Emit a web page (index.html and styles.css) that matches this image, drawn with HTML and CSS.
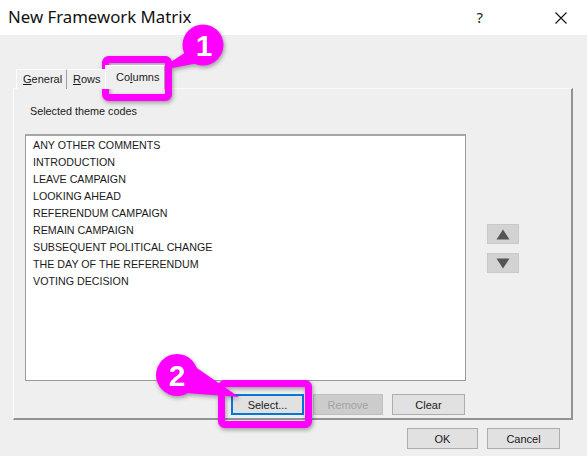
FILE: index.html
```html
<!DOCTYPE html>
<html>
<head>
<meta charset="utf-8">
<link rel="stylesheet" href="styles.css">
</head>
<body>
<div class="window">
  <div class="titlebar">
    <div class="title">New Framework Matrix</div>
    <div class="title-actions">
      <span class="help">?</span>
      <svg class="close" width="12" height="12" viewBox="0 0 12 12"><path d="M0.5 0.5 L11.5 11.5 M11.5 0.5 L0.5 11.5" stroke="#111" stroke-width="1.1" fill="none"/></svg>
    </div>
  </div>
  <div class="dialog">
    <div class="tabs">
      <div class="tab"><u>G</u>eneral</div>
      <div class="tab tab-rows"><u>R</u>ows</div>
      <div class="tab active">Co<u>l</u>umns</div>
    </div>
    <div class="panel">
      <div class="label">Selected theme codes</div>
      <div class="list-row">
        <div class="listcol">
          <ul class="list">
            <li>ANY OTHER COMMENTS</li>
            <li>INTRODUCTION</li>
            <li>LEAVE CAMPAIGN</li>
            <li>LOOKING AHEAD</li>
            <li>REFERENDUM CAMPAIGN</li>
            <li>REMAIN CAMPAIGN</li>
            <li>SUBSEQUENT POLITICAL CHANGE</li>
            <li>THE DAY OF THE REFERENDUM</li>
            <li>VOTING DECISION</li>
          </ul>
          <div class="list-buttons">
            <button class="btn focus btn-select">Select...</button>
            <button class="btn disabled btn-remove">Remove</button>
            <button class="btn btn-clear">Clear</button>
          </div>
        </div>
        <div class="movers">
          <div class="mover"><svg width="14" height="11" viewBox="0 0 14 11"><path d="M7 0.5 L13.5 10.5 L0.5 10.5 Z" fill="#555"/></svg></div>
          <div class="mover"><svg width="14" height="11" viewBox="0 0 14 11"><path d="M0.5 0.5 L13.5 0.5 L7 10.5 Z" fill="#555"/></svg></div>
        </div>
      </div>
    </div>
    <div class="footer">
      <button class="btn btn-ok">OK</button>
      <button class="btn btn-cancel">Cancel</button>
    </div>
  </div>
  <svg class="annotations" width="587" height="456" viewBox="0 0 587 456">
    <g class="mark">
      <rect x="105.5" y="59.5" width="63" height="38" rx="3" fill="none" stroke="#ff00ff" stroke-width="7"/>
      <circle cx="203" cy="45" r="20.5" fill="#ff00ff"/>
      <path d="M186 52 L157 71 L198 63 Z" fill="#ff00ff"/>
      <text x="204" y="56" class="badge-num">1</text>
    </g>
    <g class="mark">
      <rect x="221.5" y="383.5" width="87" height="41" rx="3" fill="none" stroke="#ff00ff" stroke-width="7"/>
      <circle cx="177" cy="375" r="21" fill="#ff00ff"/>
      <path d="M191 364 L239 397 L186 393 Z" fill="#ff00ff"/>
      <text x="177" y="386" class="badge-num">2</text>
    </g>
  </svg>
</div>
</body>
</html>
```
FILE: styles.css
```css
* { box-sizing: border-box; }
html, body { margin: 0; padding: 0; }
body {
  width: 587px;
  height: 456px;
  overflow: hidden;
  background: #f0f0f0;
  font-family: "Liberation Sans", Arial, sans-serif;
  color: #111;
}
.window {
  position: relative;
  width: 587px;
  height: 456px;
  background: #f0eff0;
}
.titlebar {
  height: 35px;
  background: #ffffff;
  display: flex;
  align-items: center;
  justify-content: space-between;
  padding: 0 20px 0 8px;
}
.title {
  font-family: "Noto Sans", "Open Sans", sans-serif;
  font-size: 16.8px;
  color: #111;
  margin-top: -2px;
}
.title-actions {
  display: flex;
  align-items: center;
  gap: 72px;
}
.help {
  font-family: "Noto Sans", sans-serif;
  font-size: 15px;
  color: #222;
  margin-top: -2px;
}
.close { display: block; }

.dialog {
  padding: 31px 0 0 13px;
}
.tabs {
  display: flex;
  align-items: flex-end;
  height: 23px;
  padding-left: 3px;
  position: relative;
  z-index: 1;
  margin-bottom: -1px;
}
.tab {
  height: 20px;
  font-size: 11px;
  line-height: 19px;
  padding: 0 6px;
  border-top: 1px solid #fdfdfd;
  border-left: 1px solid #fdfdfd;
  border-right: 1px solid #a0a0a0;
  background: #f0eff0;
  color: #1a1a1a;
  width: 51px;
}
.tab-rows {
  width: 38px;
  border-left: none;
  border-right: none;
}
.tab.active {
  height: 24px;
  width: 60px;
  padding-left: 10px;
  line-height: 22px;
  border-right: 1px solid #a0a0a0;
  border-left: 1px solid #fdfdfd;
}
.tab u { text-decoration-thickness: 1px; text-underline-offset: 1px; }

.panel {
  width: 560px;
  height: 332px;
  border-top: 1px solid #fbfbfb;
  border-left: 1px solid #fdfdfd;
  border-right: 2px solid #939393;
  border-bottom: 2px solid #939393;
  padding: 16px 0 0 11px;
}
.label {
  font-size: 10.8px;
  margin-left: 5px;
  height: 29px;
  color: #1a1a1a;
}
.list-row {
  display: flex;
  align-items: flex-start;
}
.listcol {
  width: 441px;
}
.list {
  list-style: none;
  margin: 0;
  width: 441px;
  height: 247px;
  background: #ffffff;
  border: 1px solid #9a9a9a;
  border-top: 2px solid #a6a6a6;
  padding: 1px 0 0 7px;
}
.list li {
  font-size: 10.7px;
  line-height: 17px;
  height: 17px;
  color: #1a1a1a;
}
.list-buttons {
  display: flex;
  justify-content: flex-end;
  gap: 9px;
  margin-top: 13px;
  padding-right: 1px;
}
.movers {
  margin: 90px 0 0 21px;
  display: flex;
  flex-direction: column;
  gap: 9px;
}
.mover {
  width: 32px;
  height: 20px;
  background: #d3d3d3;
  border: 1px solid #c9c9c9;
  display: flex;
  align-items: center;
  justify-content: center;
}
.mover svg { display: block; }

.btn {
  height: 21px;
  width: 73px;
  font-family: "Liberation Sans", Arial, sans-serif;
  font-size: 11px;
  color: #1a1a1a;
  background: #e1e1e1;
  border: 1px solid #adadad;
  padding: 0;
  margin: 0;
}
.btn-remove { width: 70px; }
.btn-ok { width: 71px; }
.btn.disabled {
  background: #cccccc;
  border-color: #bfbfbf;
  color: #a3a3a3;
}
.btn.focus {
  border: 1px solid #0078d7;
  box-shadow: inset 0 0 0 1px #0078d7;
}
.footer {
  display: flex;
  justify-content: flex-end;
  gap: 9px;
  margin-top: 8px;
  padding-right: 27px;
}
.annotations {
  position: absolute;
  left: 0;
  top: 0;
  pointer-events: none;
}
.mark {
  filter: drop-shadow(1px 2px 2px rgba(0, 0, 0, 0.35));
}
.badge-num {
  font-family: "Liberation Sans", Arial, sans-serif;
  font-weight: bold;
  font-size: 30px;
  fill: #ffffff;
  text-anchor: middle;
}
```
